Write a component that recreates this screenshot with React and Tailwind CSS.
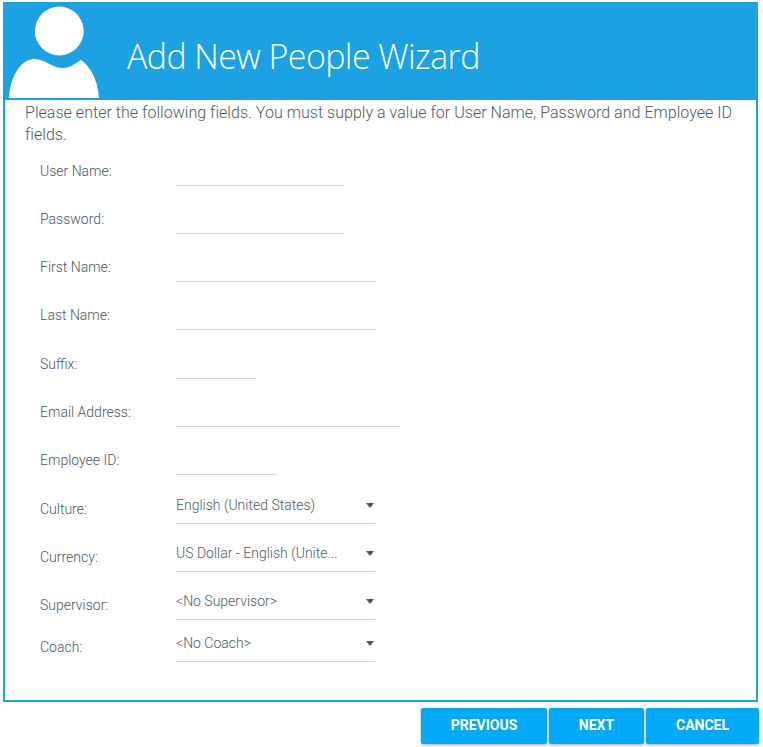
import React from "react";

const FIELDS = [
  { label: "User Name:", width: "w-[168px]", height: "h-[40px]" },
  { label: "Password:", width: "w-[168px]", height: "h-[48px]" },
  { label: "First Name:", width: "w-[200px]", height: "h-[48px]" },
  { label: "Last Name:", width: "w-[200px]", height: "h-[48px]" },
  { label: "Suffix:", width: "w-[80px]", height: "h-[49px]" },
  { label: "Email Address:", width: "w-[224px]", height: "h-[48px]" },
  { label: "Employee ID:", width: "w-[100px]", height: "h-[48px]" },
];

const SELECTS = [
  { label: "Culture:", value: "English (United States)", height: "h-[49px]" },
  { label: "Currency:", value: "US Dollar - English (Unite...", height: "h-[48px]" },
  { label: "Supervisor:", value: "<No Supervisor>", height: "h-[48px]" },
  { label: "Coach:", value: "<No Coach>", height: "h-[42px]" },
];

// drawn in page coordinates so it is easy to compare with the screenshot
const UserIcon = () => (
  <svg width="91" height="94" viewBox="9 4 91 94" className="ml-[4px] shrink-0">
    <circle cx="59.3" cy="31" r="24.4" fill="#fff" />
    <path
      d="M9 98 C10 78 20 60 33 59 C44 58 52 68 63 68 C70 68 76 63 81 60 C90 66 98 80 99 98 Z"
      fill="#fff"
    />
  </svg>
);

const App = () => {
  return (
    <div className="w-[763px] h-[747px] bg-white pt-[2px] pl-[3px] font-['Roboto',sans-serif] overflow-hidden">
      <div className="w-[755px] h-[700px] border-2 border-[#1ca1e3]">
        <div className="h-[96px] bg-[#1ca1e3] flex">
          <UserIcon />
          <h1 className="ml-[27px] mt-[29px] text-[34px] leading-[46px] font-light text-white font-['Open_Sans',sans-serif] tracking-[-0.6px]">
            Add New People Wizard
          </h1>
        </div>

        <p className="pl-[20px] pr-[16px] pt-[2px] text-[16px] leading-[22px] font-light tracking-[0.035px] text-[#4f5a63]">
          Please enter the following fields. You must supply a value for User Name, Password and Employee ID fields.
        </p>

        <div className="pl-[35px]">
          {FIELDS.map((f) => (
            <div key={f.label} className={`flex items-end ${f.height}`}>
              <label className="w-[136px] mb-[6px] text-[14px] leading-[18px] font-light text-[#4d5760]">
                {f.label}
              </label>
              <div className={`h-[1px] bg-[#cfd6da] ${f.width}`} />
            </div>
          ))}

          {SELECTS.map((s) => (
            <div key={s.label} className={`flex items-end ${s.height}`}>
              <label className="w-[136px] mb-[6px] text-[14px] leading-[18px] font-light text-[#4d5760]">
                {s.label}
              </label>
              <div className="w-[199px] h-[36px] border-b border-[#cfd6da] flex items-start justify-between pt-[8px] pr-[1px]">
                <span className="text-[14px] leading-[18px] font-light text-[#4d5b68] truncate">{s.value}</span>
                <span className="mt-[7px] w-0 h-0 border-x-[4.5px] border-x-transparent border-t-[5px] border-t-[#44546a]" />
              </div>
            </div>
          ))}
        </div>
      </div>

      <div className="w-[756px] mt-[6px] flex justify-end gap-[2px]">
        {["PREVIOUS", "NEXT", "CANCEL"].map((b, i) => (
          <button
            key={b}
            className={`h-[36px] pb-[2px] rounded-[2px] bg-[#03a9f9] text-white text-[14px] font-bold shadow-[0_1px_3px_rgba(0,0,0,0.35)] ${
              i === 0 ? "w-[126px]" : i === 1 ? "w-[95px]" : "w-[113px]"
            }`}
          >
            {b}
          </button>
        ))}
      </div>
    </div>
  );
};

export default App;
